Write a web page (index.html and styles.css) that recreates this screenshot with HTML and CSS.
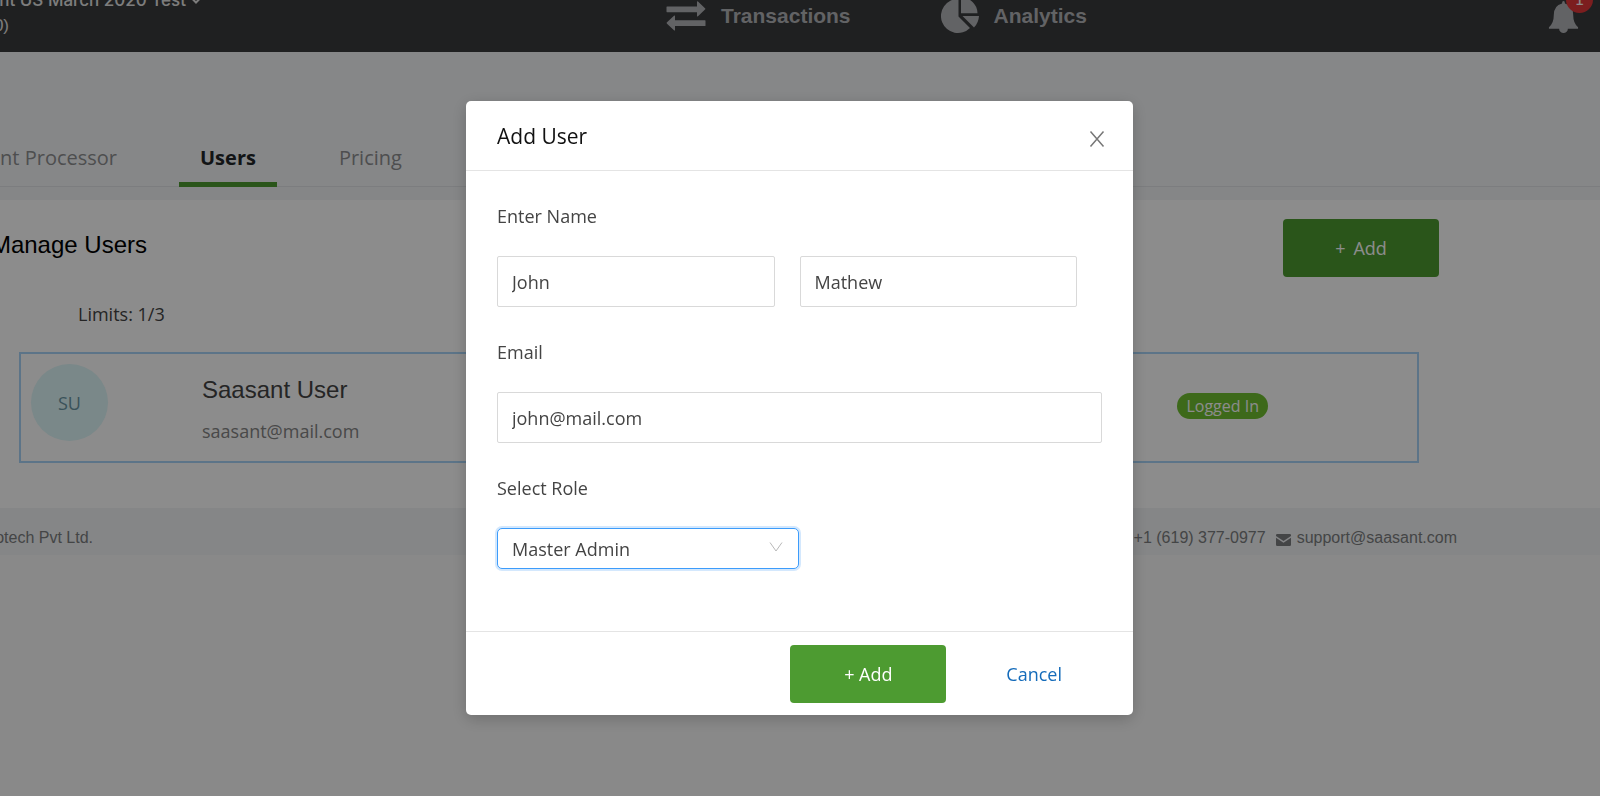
FILE: index.html
```html
<!DOCTYPE html>
<html lang="en">
<head>
<meta charset="utf-8">
<title>Manage Users</title>
<link rel="stylesheet" href="styles.css">
</head>
<body>
<div class="page">
  <header class="topbar">
    <div class="company">
      <span class="company-name">nt US March 2020 Test
        <svg class="caret" viewBox="0 0 10 6" aria-hidden="true"><path d="M1.500 1l3.500 3.500L8.500 1"/></svg>
      </span>
      <span class="company-id">0)</span>
    </div>
    <nav class="mainnav">
      <a class="mainlink" href="#">
        <svg class="icon-swap" viewBox="0 0 40 30" aria-hidden="true"><path d="M1 5.500h30V1q0-1.200 1-.4l7 6.600q.7.700 0 1.400l-7 6.600q-1 .8-1-.4v-3.600H1q-.5 0-.5-.6V6q0-.5.5-.5zM39 25H9v3.900q0 1.200-1 .4l-7-6.600q-.7-.7 0-1.400l7-6.600q1-.8 1 .4v4.200h30q.5 0 .5.600v4.500q0 .6-.5.600z"/></svg>
        Transactions
      </a>
      <a class="mainlink" href="#">
        <svg class="icon-pie" viewBox="0 0 38 38" aria-hidden="true"><path d="M17.500 2v17.500l11.500 11.500A17 17 0 1 1 17.500 2z"/><path d="M20 .5A16 16 0 0 1 36.500 16.300H20z"/><path d="M21.500 19H38q-.5 7-5 11.500z"/></svg>
        Analytics
      </a>
    </nav>
    <button class="bell" type="button" aria-label="Notifications">
      <svg class="icon-bell" viewBox="0 0 30 34" aria-hidden="true"><path d="M15 1q1.500 0 1.500 2.500 8.500 2 8.500 12 0 8.500 5 12.500v1.500H19.500a4.500 4.500 0 0 1-9 0H0V28q5-4 5-12.500 0-10 8.500-12Q13.500 1 15 1z"/></svg>
      <span class="bell-count">1</span>
    </button>
  </header>

  <nav class="tabs">
    <a class="tab tab-first" href="#">nt Processor</a>
    <a class="tab tab-active" href="#">Users</a>
    <a class="tab" href="#">Pricing</a>
  </nav>

  <main class="content">
    <div class="content-head">
      <h1 class="heading">Manage Users</h1>
      <button class="btn btn-open" type="button"><span>+</span><span>Add</span></button>
    </div>
    <p class="limits">Limits: 1/3</p>
    <section class="user-card">
      <div class="avatar">SU</div>
      <div class="user-info">
        <h2 class="user-name">Saasant User</h2>
        <p class="user-mail">saasant@mail.com</p>
      </div>
      <span class="status">Logged In</span>
    </section>
  </main>

  <footer class="footer">
    <span class="footer-owner">otech Pvt Ltd.</span>
    <div class="contact">
      <span>+1 (619) 377-0977</span>
      <svg class="icon-mail" viewBox="0 0 15 12" aria-hidden="true"><path d="M0 1.200Q0 0 1.200 0h12.600Q15 0 15 1.200v.9L7.500 7 0 2.100z"/><path d="M0 3.700l7.500 5 7.500-5v7.100q0 1.200-1.200 1.200H1.200Q0 12 0 10.800z"/></svg>
      <a class="contact-mail" href="#">support@saasant.com</a>
    </div>
  </footer>
</div>

<div class="overlay">
  <form class="modal" role="dialog" aria-labelledby="modal-title">
    <div class="modal-head">
      <h2 class="modal-title" id="modal-title">Add User</h2>
      <button class="close" type="button" aria-label="Close">
        <svg class="icon-close" viewBox="0 0 16 16" aria-hidden="true"><path d="M1.500.5l13 15M14.500.5l-13 15"/></svg>
      </button>
    </div>
    <div class="modal-body">
      <div class="field">
        <label class="label" for="first-name">Enter Name</label>
        <div class="names">
          <input class="input" id="first-name" type="text" value="John">
          <input class="input" type="text" aria-label="Last name" value="Mathew">
        </div>
      </div>
      <div class="field">
        <label class="label" for="email">Email</label>
        <input class="input" id="email" type="text" value="john@mail.com">
      </div>
      <div class="field">
        <label class="label" for="role">Select Role</label>
        <div class="select-wrap">
          <select class="select" id="role"><option>Master Admin</option></select>
          <svg class="icon-down" viewBox="0 0 14 10" aria-hidden="true"><path d="M1 .5l6 8.500 6-8.500"/></svg>
        </div>
      </div>
    </div>
    <div class="modal-foot">
      <button class="btn btn-submit" type="button">+ Add</button>
      <button class="cancel" type="button">Cancel</button>
    </div>
  </form>
</div>
</body>
</html>
```

FILE: styles.css
```css
* {
  box-sizing: border-box;
}

body {
  margin: 0;
  overflow: hidden;
  background: #f9f9f9;
  color: #444;
  font: 18px/28px "Open Sans", sans-serif;
}

h1, h2, p {
  margin: 0;
  font-weight: 400;
}

a {
  color: inherit;
  text-decoration: none;
}

button, input, select {
  font: inherit;
  color: inherit;
}

button {
  border: 0;
  padding: 0;
  background: none;
  cursor: pointer;
}

svg {
  flex-shrink: 0;
}

.page {
  min-height: 100vh;
}

/* Top bar */
.topbar {
  display: flex;
  align-items: center;
  height: 52px;
  padding: 0 21px 20px 0;
  overflow: hidden;
  background: #393b3d;
  font-family: "Liberation Sans", sans-serif;
}

.company {
  display: flex;
  flex-direction: column;
  flex: 0 0 666px;
  padding-bottom: 6px;
  color: #e4e4e4;
  font-size: 17px;
  line-height: 25px;
}

.company-name,
.company-id {
  display: flex;
  align-items: center;
  justify-content: flex-end;
  gap: 5px;
  width: 201px;
  white-space: nowrap;
}

.company-name {
  font-family: Inter, sans-serif;
  font-weight: 500;
}

.company-id {
  width: 9px;
}

.caret {
  width: 10px;
  height: 6px;
  fill: none;
  stroke: #e4e4e4;
  stroke-width: 2;
}

.mainnav {
  display: flex;
  gap: 90px;
  flex: 1;
}

.mainlink {
  display: flex;
  align-items: center;
  gap: 15px;
  color: #b3b4b8;
  font-size: 21px;
  font-weight: 700;
}

.icon-swap {
  width: 40px;
  height: 30px;
  fill: #b3b4b8;
}

.icon-pie {
  width: 38px;
  height: 38px;
  fill: #b3b4b8;
}

.bell {
  position: relative;
  height: 34px;
}

.icon-bell {
  display: block;
  width: 31px;
  height: 33px;
  fill: #b3b4b8;
}

.bell-count {
  position: absolute;
  top: -13px;
  right: -14px;
  width: 27px;
  height: 27px;
  border-radius: 50%;
  background: #e2373a;
  color: #fff;
  font: 15px/29px "DejaVu Sans", sans-serif;
}

/* Tabs */
.tabs {
  display: flex;
  align-items: flex-end;
  gap: 41px;
  height: 135px;
  border-bottom: 1px solid #e2e4e7;
  background: #f4f6f8;
  color: #8e8f91;
  font-size: 20px;
}

.tab {
  padding: 0 21px 10px;
  border-bottom: 5px solid transparent;
  margin-bottom: -1px;
}

.tab-first {
  display: flex;
  justify-content: flex-end;
  width: 138px;
  padding-left: 0;
  white-space: nowrap;
}

.tab-active {
  border-bottom-color: #4d9b31;
  color: #222629;
  font-weight: 700;
}

/* Page content */
.content {
  padding: 19px 161px 45px 0;
  background: #fff;
  box-shadow: 0 -13px #f2f4f6;
  margin-top: 13px;
}

.content-head {
  display: flex;
  align-items: center;
  justify-content: space-between;
}

.heading {
  display: flex;
  justify-content: flex-end;
  width: 147px;
  padding-bottom: 6px;
  color: #000;
  font: 24px/34px "Liberation Sans", sans-serif;
  white-space: nowrap;
}

.btn {
  width: 156px;
  height: 58px;
  border-radius: 4px;
  background: #4d9b31;
  color: #fff;
}

.btn-open {
  display: flex;
  align-items: center;
  justify-content: center;
  gap: 8px;
}

.btn-submit {
  font-weight: 500;
}

.limits {
  margin: 23px 0 24px 78px;
}

.user-card {
  display: flex;
  margin: 0 20px 0 19px;
  padding: 10px 149px 16px 10px;
  border: 2px solid #a8d4f8;
}

.avatar {
  width: 77px;
  height: 77px;
  border-radius: 50%;
  background: #def7f9;
  color: #6b96a4;
  line-height: 79px;
  text-align: center;
}

.user-info {
  flex: 1;
  padding: 9px 0 0 94px;
}

.user-name {
  margin-bottom: 10px;
  font: 24px/34px "Liberation Sans", sans-serif;
}

.user-mail {
  color: #858585;
}

.status {
  height: 26px;
  margin-top: 29px;
  padding: 0 9px;
  border-radius: 13px;
  background: #6fbf31;
  color: #fff;
  font-size: 16px;
  line-height: 26px;
}

/* Footer */
.footer {
  display: flex;
  justify-content: space-between;
  padding: 18px 143px 5px 0;
  background: #f2f4f6;
  color: #7c7e80;
  font: 16px/24px "Liberation Sans", sans-serif;
}

.footer-owner {
  display: flex;
  justify-content: flex-end;
  width: 93px;
  white-space: nowrap;
}

.contact {
  display: flex;
  align-items: center;
}

.icon-mail {
  width: 15px;
  height: 12px;
  margin: 4px 6px 0 10px;
  fill: #7c7e80;
}

/* Modal */
.overlay {
  position: fixed;
  inset: 0;
  display: flex;
  align-items: flex-start;
  justify-content: center;
  padding: 101px 1px 0 0;
  background: rgba(0, 0, 0, 0.45);
}

.modal {
  width: 667px;
  border-radius: 5px;
  background: #fff;
  box-shadow: 0 4px 16px rgba(0, 0, 0, 0.2);
}

.modal-head {
  display: flex;
  align-items: center;
  justify-content: space-between;
  height: 70px;
  padding: 0 28px 0 31px;
  border-bottom: 1px solid #e4e4e4;
}

.modal-title {
  color: #111;
  font-size: 21px;
}

.close {
  display: flex;
  padding-top: 7px;
}

.icon-close {
  width: 16px;
  height: 16px;
  fill: none;
  stroke: #777;
  stroke-width: 1.500;
}

.modal-body {
  display: flex;
  flex-direction: column;
  gap: 31px;
  padding: 31px 31px 62px;
}

.field {
  display: flex;
  flex-direction: column;
  gap: 26px;
}

.names {
  display: flex;
  gap: 25px;
  padding-right: 25px;
}

.input {
  width: 100%;
  min-width: 0;
  height: 51px;
  padding: 0 14px;
  border: 1px solid #d9d9d9;
  border-radius: 2px;
  background: #fff;
  outline: 0;
}

.select-wrap {
  position: relative;
  width: 302px;
}

.select {
  display: block;
  width: 100%;
  height: 41px;
  padding: 0 14px;
  border: 1px solid #3d9cfb;
  border-radius: 5px;
  appearance: none;
  background: #fff;
  box-shadow: 0 0 0 2px #d4e8fd;
  outline: 0;
}

.icon-down {
  position: absolute;
  top: 14px;
  right: 16px;
  width: 14px;
  height: 10px;
  fill: none;
  stroke: #b8b8b8;
}

.modal-foot {
  display: flex;
  align-items: center;
  justify-content: flex-end;
  gap: 60px;
  padding: 13px 71px 12px;
  border-top: 1px solid #e4e4e4;
}

.cancel {
  color: #146bba;
}
```
